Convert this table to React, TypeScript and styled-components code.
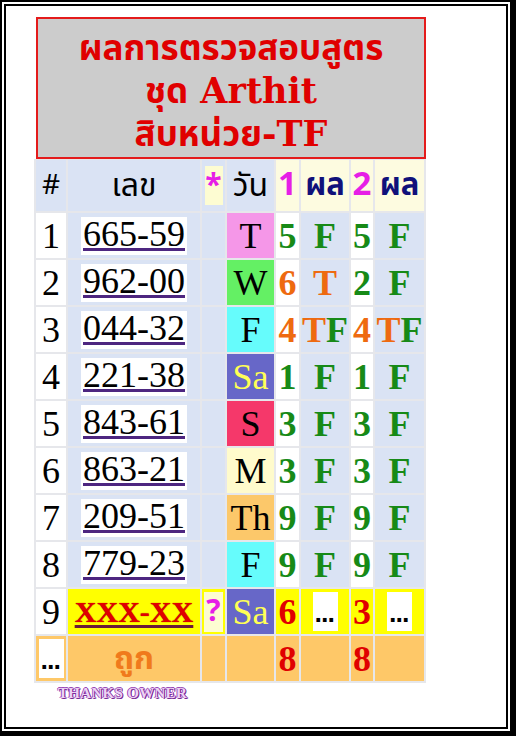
import React from "react";
import styled, { createGlobalStyle } from "styled-components";

const Global = createGlobalStyle`
  html, body { margin: 0; padding: 0; background: #fff; }
  * { box-sizing: border-box; }
`;

const SERIF = `"Liberation Serif", "DejaVu Serif", serif`;
const THAI = `"Noto Sans Thai", "Noto Sans", "DejaVu Sans", sans-serif`;

const Outer = styled.div`
  width: 516px;
  height: 736px;
  border-style: solid;
  border-color: #000;
  border-width: 2px 6px 5px 2px;
  padding: 2px;
  background: #fff;
`;

const Inner = styled.div`
  width: 100%;
  height: 100%;
  border: 2px solid #000;
  padding: 11px 0 0 28px;
  display: flex;
  flex-direction: column;
  align-items: flex-start;
`;

const Title = styled.div`
  width: 390px;
  margin-left: 2px;
  height: 142px;
  border: 2px solid #e41b1b;
  background: #cccccc;
  display: flex;
  flex-direction: column;
  align-items: center;
  justify-content: center;
  padding-top: 4px;
  color: #e00000;
`;

const TitleLine = styled.div`
  font-family: "DejaVu Serif", "Noto Sans Thai", sans-serif;
  font-size: 35px;
  line-height: 43px;
  font-weight: 700;
  white-space: nowrap;
`;

const Table = styled.div`
  display: grid;
  grid-template-columns: 30px 132px 23px 47px 23px 48px 22px 49px;
  grid-template-rows: 51px repeat(10, 45px);
  gap: 2px;
  padding: 1px 2px 2px 2px;
  background: #e6e7eb;
`;

const Cell = styled.div<{ $bg?: string; $color?: string; $bold?: boolean; $size?: number; $sans?: boolean }>`
  background: ${(p) => p.$bg || "#dae3f4"};
  color: ${(p) => p.$color || "#000"};
  font-family: ${(p) => (p.$sans ? THAI : SERIF)};
  font-weight: ${(p) => (p.$bold ? 700 : 400)};
  font-size: ${(p) => p.$size || 36}px;
  display: flex;
  align-items: center;
  justify-content: center;
  line-height: 1;
  white-space: nowrap;
  overflow: visible;
`;

const Boxed = styled.span<{ $bg: string; $w: number; $h: number; $color?: string }>`
  display: flex;
  align-items: center;
  justify-content: center;
  flex: none;
  width: ${(p) => p.$w}px;
  height: ${(p) => p.$h}px;
  background: ${(p) => p.$bg};
  color: ${(p) => p.$color || "inherit"};
`;

const Dots = styled.span`
  display: flex;
  align-items: flex-end;
  justify-content: center;
  flex: none;
  width: 25px;
  height: 39px;
  background: #fff;
  color: #000;
  font-family: "DejaVu Sans", sans-serif;
  font-weight: 700;
  font-size: 21px;
  line-height: 1;
  letter-spacing: -1.5px;
  padding: 0 2px 5px 0;
`;

const Num = styled.span`
  background: #fff;
  padding: 1px 2px 5px;
  line-height: 32px;
  font-family: ${SERIF};
  font-size: 36px;
  text-decoration: underline;
  text-decoration-color: #4d2680;
  text-decoration-thickness: 3px;
  text-underline-offset: 2px;
`;

const Xnum = styled.span`
  color: #e00000;
  font-family: ${SERIF};
  font-weight: 700;
  font-size: 30px;
  line-height: 30px;
  text-decoration: underline;
  text-decoration-color: #6a1b3a;
  text-decoration-thickness: 3px;
  text-underline-offset: 3px;
  text-shadow: 0 0 1px #900;
`;

const Thanks = styled.div`
  margin: 2px 0 0 24px;
  font-family: ${SERIF};
  font-weight: 700;
  font-size: 15px;
  letter-spacing: 0.3px;
  color: #ecd3f4;
  text-shadow: 1px 1px 0 #7a2a98, -1px 0 0 #9b4bb8, 0 -1px 0 #9b4bb8, 1px 0 0 #7a2a98;
`;

const G = "#178a17";
const O = "#ee6a10";
const RED = "#e00000";
const MAG = "#e61ee6";
const NAVY = "#10107a";

type Part = [string, string];
type Row = {
  n: string;
  num: string;
  day: string;
  dayBg: string;
  dayColor?: string;
  a: Part;
  pa: Part[];
  b: Part;
  pb: Part[];
};

const rows: Row[] = [
  { n: "1", num: "665-59", day: "T", dayBg: "#f597e8", a: ["5", G], pa: [["F", G]], b: ["5", G], pb: [["F", G]] },
  { n: "2", num: "962-00", day: "W", dayBg: "#64f064", a: ["6", O], pa: [["T", O]], b: ["2", G], pb: [["F", G]] },
  { n: "3", num: "044-32", day: "F", dayBg: "#66fcfc", a: ["4", O], pa: [["T", O], ["F", G]], b: ["4", O], pb: [["T", O], ["F", G]] },
  { n: "4", num: "221-38", day: "Sa", dayBg: "#6767c8", dayColor: "#ffff55", a: ["1", G], pa: [["F", G]], b: ["1", G], pb: [["F", G]] },
  { n: "5", num: "843-61", day: "S", dayBg: "#f5386a", a: ["3", G], pa: [["F", G]], b: ["3", G], pb: [["F", G]] },
  { n: "6", num: "863-21", day: "M", dayBg: "#fffbcc", a: ["3", G], pa: [["F", G]], b: ["3", G], pb: [["F", G]] },
  { n: "7", num: "209-51", day: "Th", dayBg: "#fcc86a", a: ["9", G], pa: [["F", G]], b: ["9", G], pb: [["F", G]] },
  { n: "8", num: "779-23", day: "F", dayBg: "#66fcfc", a: ["9", G], pa: [["F", G]], b: ["9", G], pb: [["F", G]] },
];

const Parts = ({ parts }: { parts: Part[] }) => (
  <>
    {parts.map(([t, c], i) => (
      <span key={i} style={{ color: c }}>
        {t}
      </span>
    ))}
  </>
);

const YEL = "#ffff00";
const ORG = "#fec868";
const CREAM = "#fdfbe0";

export default function App() {
  return (
    <>
      <Global />
      <Outer>
        <Inner>
          <Title>
            <TitleLine>ผลการตรวจสอบสูตร</TitleLine>
            <TitleLine>ชุด Arthit</TitleLine>
            <TitleLine>สิบหน่วย-TF</TitleLine>
          </Title>
          <Table>
            <Cell $sans $size={28}>#</Cell>
            <Cell $sans $size={32}>เลข</Cell>
            <Cell>
              <Boxed $bg="#fdfcd2" $w={18} $h={39} $color={MAG}>
                <Cell as="span" $bg="transparent" $color={MAG} $bold $size={30} $sans>*</Cell>
              </Boxed>
            </Cell>
            <Cell $sans $size={32}>วัน</Cell>
            <Cell $bg={CREAM} $color={MAG} $bold $sans $size={33}>1</Cell>
            <Cell $bg={CREAM} $color={NAVY} $bold $sans $size={31}>ผล</Cell>
            <Cell $bg={CREAM} $color={MAG} $bold $sans $size={33}>2</Cell>
            <Cell $bg={CREAM} $color={NAVY} $bold $sans $size={31}>ผล</Cell>

            {rows.map((r) => (
              <React.Fragment key={r.n}>
                <Cell $bg="#fff">{r.n}</Cell>
                <Cell>
                  <Num>{r.num}</Num>
                </Cell>
                <Cell />
                <Cell $bg={r.dayBg} $color={r.dayColor}>{r.day}</Cell>
                <Cell $bg="#fff" $bold $color={r.a[1]}>{r.a[0]}</Cell>
                <Cell $bold>
                  <Parts parts={r.pa} />
                </Cell>
                <Cell $bg="#fff" $bold $color={r.b[1]}>{r.b[0]}</Cell>
                <Cell $bold>
                  <Parts parts={r.pb} />
                </Cell>
              </React.Fragment>
            ))}

            <Cell $bg="#fff">9</Cell>
            <Cell $bg={YEL}>
              <Xnum>XXX-XX</Xnum>
            </Cell>
            <Cell $bg={YEL}>
              <Boxed $bg="#fdfcd2" $w={19} $h={40} $color={MAG}>
                <Cell as="span" $bg="transparent" $color={MAG} $bold $size={30} $sans>?</Cell>
              </Boxed>
            </Cell>
            <Cell $bg="#6767c8" $color="#ffff55">Sa</Cell>
            <Cell $bg={YEL} $color={RED} $bold>6</Cell>
            <Cell $bg={YEL}>
              <Dots>...</Dots>
            </Cell>
            <Cell $bg={YEL} $color={RED} $bold>3</Cell>
            <Cell $bg={YEL}>
              <Dots>...</Dots>
            </Cell>

            <Cell $bg={ORG}>
              <Dots>...</Dots>
            </Cell>
            <Cell $bg={ORG} $color="#f07a1c" $bold $sans $size={32}>ถูก</Cell>
            <Cell $bg={ORG} />
            <Cell $bg={ORG} />
            <Cell $bg={ORG} $color={RED} $bold>8</Cell>
            <Cell $bg={ORG} />
            <Cell $bg={ORG} $color={RED} $bold>8</Cell>
            <Cell $bg={ORG} />
          </Table>
          <Thanks>THANKS OWNER</Thanks>
        </Inner>
      </Outer>
    </>
  );
}
